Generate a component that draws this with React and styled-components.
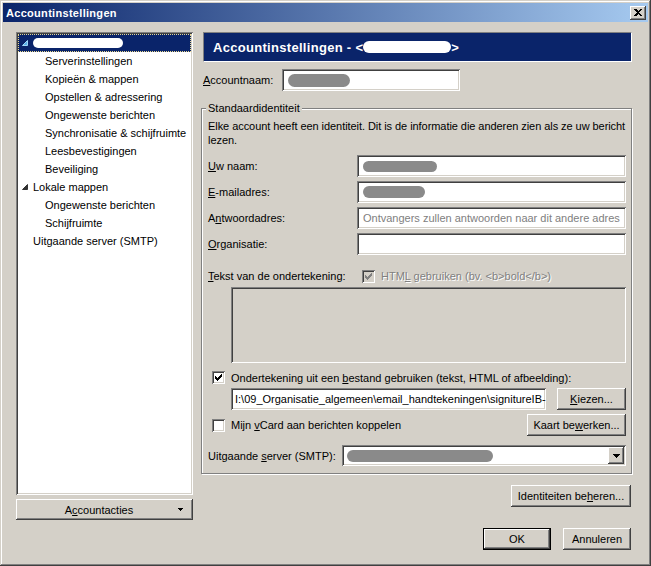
import React from 'react'
import styled, { createGlobalStyle, css } from 'styled-components'

const GlobalStyle = createGlobalStyle`
  html, body { margin: 0; padding: 0; background: #d4d0c8; }
  body {
    font-family: "Liberation Sans", Arial, sans-serif;
    font-size: 11px;
    color: #000;
  }
  * { box-sizing: border-box; }
`

const raised = css`
  background: #d4d0c8;
  box-shadow: inset -1px -1px #404040, inset 1px 1px #fff, inset -2px -2px #808080, inset 2px 2px #d4d0c8;
`
const sunken = css`
  box-shadow: inset 1px 1px #808080, inset -1px -1px #fff, inset 2px 2px #404040, inset -2px -2px #d4d0c8;
`

const Window = styled.div`
  width: 651px;
  height: 566px;
  padding: 3px;
  display: flex;
  flex-direction: column;
  background: #d4d0c8;
  box-shadow: inset -1px -1px #404040, inset 1px 1px #d4d0c8, inset -2px -2px #808080, inset 2px 2px #fff;
`
const TitleBar = styled.div`
  height: 19px;
  display: flex;
  align-items: center;
  justify-content: space-between;
  padding: 0 2px 0 3px;
  background: linear-gradient(to right, #0a246a, #a6caf0);
  color: #fff;
  font-weight: bold;
  letter-spacing: 0.3px;
`
const CloseButton = styled.div`
  ${raised};
  width: 16px;
  height: 14px;
  display: flex;
  align-items: center;
  justify-content: center;
`
const Body = styled.div`
  flex: 1;
  display: flex;
  gap: 8px;
  padding: 10px 15px 13px 13px;
  min-height: 0;
`
const LeftCol = styled.div`
  width: 177px;
  flex: none;
  display: flex;
  flex-direction: column;
  gap: 4px;
`
const Tree = styled.div`
  ${sunken};
  height: 463px;
  background: #fff;
  padding: 2px;
`
const TreeRow = styled.div`
  height: 18px;
  display: flex;
  align-items: center;
  padding-left: ${p => p.$indent}px;
  white-space: nowrap;
  ${p => p.$selected && css`
    background: #0a246a;
    color: #fff;
    outline: 1px dotted #e8d890;
    outline-offset: -1px;
  `}
`
const Toggle = styled.span`
  width: 15px;
  flex: none;
  display: flex;
  align-items: center;
  padding-left: 4px;
`
const WideButton = styled.div`
  ${raised};
  height: 21px;
  display: flex;
  align-items: center;
  padding: 0 10px 0 4px;
`
const WideLabel = styled.span`
  flex: 1;
  text-align: center;
`
const RightCol = styled.div`
  flex: 1;
  min-width: 0;
  display: flex;
  flex-direction: column;
`
const HeaderBar = styled.div`
  height: 30px;
  margin: 0 1px 0 2px;
  padding-left: 9px;
  display: flex;
  align-items: center;
  background: #0a246a;
  border: 1px solid;
  border-color: #808080 #fff #fff #808080;
  color: #fff;
  font-size: 13px;
  font-weight: bold;
  letter-spacing: 0.3px;
`
const NameRow = styled.div`
  margin-top: 7px;
  height: 22px;
  display: flex;
  align-items: center;
  padding-left: 2px;
`
const Label = styled.span`
  width: ${p => p.$width}px;
  flex: none;
  white-space: nowrap;
`
const Field = styled.div`
  ${sunken};
  height: 22px;
  width: ${p => (p.$width ? `${p.$width}px` : 'auto')};
  flex: ${p => (p.$width ? 'none' : '1')};
  min-width: 0;
  display: flex;
  align-items: center;
  padding: 0 3px 0 ${p => p.$pad || 6}px;
  background: #fff;
  overflow: hidden;
  white-space: nowrap;
  color: ${p => (p.$placeholder ? '#808080' : '#000')};
`
const Blob = styled.span`
  display: inline-block;
  width: ${p => p.$w}px;
  height: ${p => p.$h}px;
  border-radius: 999px;
  background: ${p => p.$color};
  filter: blur(0.7px);
`
const GroupBox = styled.div`
  margin-top: 17px;
  border: 1px solid #808080;
  box-shadow: inset 1px 1px #fff, 1px 1px #fff;
  padding: 0 5px 7px 6px;
  margin-right: 1px;
`
const GroupCaption = styled.div`
  display: table;
  margin: -8px 0 0 -2px;
  padding: 0 2px;
  line-height: 14px;
  background: #d4d0c8;
`
const Description = styled.div`
  margin-top: 4px;
  line-height: 14px;
  white-space: nowrap;
  letter-spacing: -0.06px;
`
const FieldGrid = styled.div`
  margin-top: 8px;
  display: grid;
  grid-template-columns: 149px 1fr;
  grid-auto-rows: 22px;
  row-gap: 4px;
  align-items: center;
`
const InlineRow = styled.div`
  margin-top: ${p => p.$top}px;
  height: ${p => p.$height}px;
  display: flex;
  align-items: center;
  gap: ${p => p.$gap || 0}px;
  padding-left: ${p => p.$indent || 0}px;
  justify-content: ${p => (p.$spread ? 'space-between' : 'flex-start')};
`
const CheckGroup = styled.span`
  display: flex;
  align-items: center;
`
const SignatureBox = styled.div`
  ${sunken};
  margin: 4px 0 0 23px;
  height: 76px;
  background: #d4d0c8;
`
const CheckBox = styled.span`
  ${sunken};
  width: 13px;
  height: 13px;
  flex: none;
  display: inline-flex;
  align-items: center;
  justify-content: center;
  background: ${p => (p.$disabled ? '#d4d0c8' : '#fff')};
`
const CheckText = styled.span`
  margin-left: 6px;
  white-space: nowrap;
  color: ${p => (p.$disabled ? '#808080' : '#000')};
  ${p => p.$disabled && 'text-shadow: 1px 1px #fff;'}
`
const Button = styled.div`
  ${raised};
  width: ${p => p.$width}px;
  height: 22px;
  flex: none;
  display: flex;
  align-items: center;
  justify-content: center;
  white-space: nowrap;
  ${p => p.$default && 'border: 1px solid #000;'}
`
const Select = styled.div`
  ${sunken};
  flex: 1;
  height: 21px;
  display: flex;
  align-items: center;
  padding: 2px;
  background: #fff;
`
const SelectValue = styled.div`
  flex: 1;
  padding-left: 3px;
  display: flex;
  align-items: center;
`
const DropButton = styled.div`
  ${raised};
  width: 16px;
  height: 17px;
  display: flex;
  align-items: center;
  justify-content: center;
`
const ButtonRow = styled.div`
  display: flex;
  justify-content: flex-end;
  gap: 12px;
  padding-right: 2px;
  margin-top: ${p => (p.$push ? 'auto' : `${p.$top}px`)};
`

const CheckMark = ({ color = '#000' }) => (
  <svg width="7" height="7" viewBox="0 0 7 7" shapeRendering="crispEdges">
    <path
      fill={color}
      d="M6 0h1v1h-1z M5 1h2v1h-2z M0 2h1v1h-1z M4 2h3v1h-3z M0 3h2v1h-2z M3 3h3v1h-3z M0 4h5v1h-5z M1 5h3v1h-3z M2 6h1v1h-1z"
    />
  </svg>
)

const Expander = ({ hollow }) => (
  <svg width="6" height="6" viewBox="0 0 6 6">
    <polygon
      points="5.5,0.5 5.5,5.5 0.5,5.5"
      fill={hollow ? '#5ab0e8' : '#333'}
      stroke={hollow ? '#9fd8f8' : '#333'}
      strokeWidth="1"
    />
  </svg>
)

const DownArrow = ({ w = 7 }) => (
  <svg width={w} height={Math.ceil(w / 2)} viewBox={`0 0 ${w} ${Math.ceil(w / 2)}`} shapeRendering="crispEdges">
    <polygon points={`0,0 ${w},0 ${w / 2},${Math.ceil(w / 2)}`} fill="#000" />
  </svg>
)

const treeItems = [
  { indent: 12, text: 'Serverinstellingen' },
  { indent: 12, text: 'Kopieën & mappen' },
  { indent: 12, text: 'Opstellen & adressering' },
  { indent: 12, text: 'Ongewenste berichten' },
  { indent: 12, text: 'Synchronisatie & schijfruimte' },
  { indent: 12, text: 'Leesbevestigingen' },
  { indent: 12, text: 'Beveiliging' },
  { indent: 0, text: 'Lokale mappen', expander: true },
  { indent: 12, text: 'Ongewenste berichten' },
  { indent: 12, text: 'Schijfruimte' },
  { indent: 0, text: 'Uitgaande server (SMTP)' },
]

export default function App() {
  return (
    <>
      <GlobalStyle />
      <Window>
        <TitleBar>
          <span>Accountinstellingen</span>
          <CloseButton>
            <svg width="8" height="7" viewBox="0 0 8 7" shapeRendering="crispEdges">
              <path d="M0 0h2l2 2 2-2h2L5 3.5 8 7H6L4 5 2 7H0l3-3.5z" fill="#000" />
            </svg>
          </CloseButton>
        </TitleBar>
        <Body>
          <LeftCol>
            <Tree>
              <TreeRow $indent={0} $selected>
                <Toggle><Expander hollow /></Toggle>
                <Blob $w={90} $h={10} $color="#fff" />
              </TreeRow>
              {treeItems.map((item, i) => (
                <TreeRow key={i} $indent={item.indent}>
                  <Toggle>{item.expander && <Expander />}</Toggle>
                  {item.text}
                </TreeRow>
              ))}
            </Tree>
            <WideButton>
              <WideLabel>A<u>c</u>countacties</WideLabel>
              <DownArrow w={5} />
            </WideButton>
          </LeftCol>
          <RightCol>
            <HeaderBar>
              Accountinstellingen - &lt;
              <Blob $w={88} $h={12} $color="#fff" />
              &gt;
            </HeaderBar>
            <NameRow>
              <Label $width={79}><u>A</u>ccountnaam:</Label>
              <Field $width={178}>
                <Blob $w={62} $h={13} $color="#8a8a8a" />
              </Field>
            </NameRow>
            <GroupBox>
              <GroupCaption>Standaardidentiteit</GroupCaption>
              <Description>
                Elke account heeft een identiteit. Dit is de informatie die anderen zien als ze uw bericht
                <br />
                lezen.
              </Description>
              <FieldGrid>
                <Label><u>U</u>w naam:</Label>
                <Field><Blob $w={74} $h={11} $color="#8a8a8a" /></Field>
                <Label><u>E</u>-mailadres:</Label>
                <Field><Blob $w={62} $h={12} $color="#8a8a8a" /></Field>
                <Label>A<u>n</u>twoordadres:</Label>
                <Field $placeholder>Ontvangers zullen antwoorden naar dit andere adres</Field>
                <Label><u>O</u>rganisatie:</Label>
                <Field />
              </FieldGrid>
              <InlineRow $top={14} $height={14}>
                <Label $width={154}><u>T</u>ekst van de ondertekening:</Label>
                <CheckBox $disabled><CheckMark color="#808080" /></CheckBox>
                <CheckText $disabled>HTM<u>L</u> gebruiken {'(bv. <b>bold</b>)'}</CheckText>
              </InlineRow>
              <SignatureBox />
              <InlineRow $top={8} $height={13} $indent={4}>
                <CheckBox><CheckMark /></CheckBox>
                <CheckText>Ondertekening uit een <u>b</u>estand gebruiken (tekst, HTML of afbeelding):</CheckText>
              </InlineRow>
              <InlineRow $top={4} $height={22} $indent={23} $gap={11}>
                <Field $pad={4}>{'I:\\09_Organisatie_algemeen\\email_handtekeningen\\signitureIB-'}</Field>
                <Button $width={69}><u>K</u>iezen...</Button>
              </InlineRow>
              <InlineRow $top={4} $height={22} $indent={4} $spread>
                <CheckGroup>
                  <CheckBox />
                  <CheckText>Mijn <u>v</u>Card aan berichten koppelen</CheckText>
                </CheckGroup>
                <Button $width={99}>Kaart be<u>w</u>erken...</Button>
              </InlineRow>
              <InlineRow $top={9} $height={21}>
                <Label $width={134}>Uitgaande <u>s</u>erver (SMTP):</Label>
                <Select>
                  <SelectValue><Blob $w={146} $h={12} $color="#8a8a8a" /></SelectValue>
                  <DropButton><DownArrow w={7} /></DropButton>
                </Select>
              </InlineRow>
            </GroupBox>
            <ButtonRow $top={11}>
              <Button $width={120}>Identiteiten be<u>h</u>eren...</Button>
            </ButtonRow>
            <ButtonRow $push>
              <Button $width={68} $default>OK</Button>
              <Button $width={68}>Annuleren</Button>
            </ButtonRow>
          </RightCol>
        </Body>
      </Window>
    </>
  )
}
